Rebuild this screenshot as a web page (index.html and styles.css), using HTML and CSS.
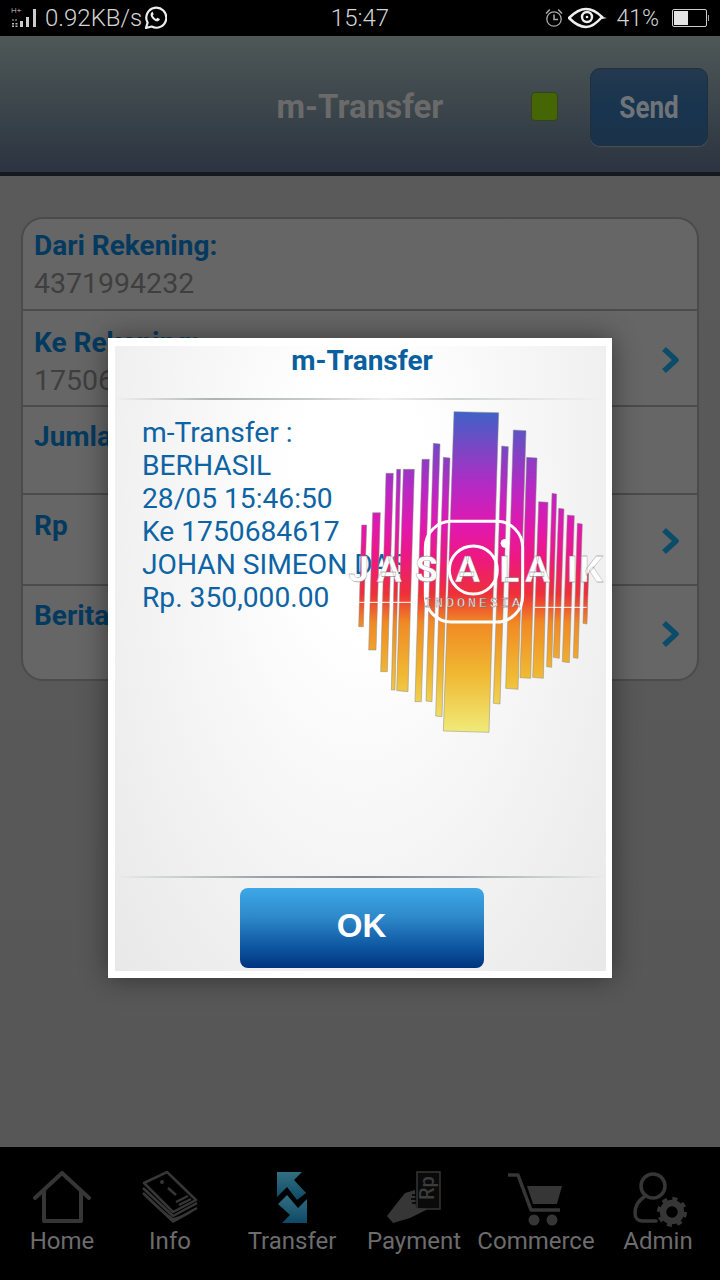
FILE: index.html
```html
<!DOCTYPE html>
<html lang="en">
<head>
  <meta charset="utf-8">
  <title>m-Transfer</title>
  <link rel="stylesheet" href="styles.css">
</head>
<body>
  <div class="phone">
    <div class="status">
      <div class="status-left">
        <svg class="signal" width="30" height="28" viewBox="0 0 30 28">
          <text x="2" y="9" class="hplus">H+</text>
          <path d="M3 16h6" stroke="#777" stroke-width="1.500" stroke-dasharray="2 1"/>
          <path d="M4 19v4M7.500 19v4" stroke="#bbb" stroke-width="2" stroke-dasharray="1.500 1"/>
          <rect x="11" y="17" width="3" height="6" fill="#ccc"/>
          <rect x="17" y="13" width="3" height="10" fill="#ccc"/>
          <rect x="24" y="5" width="3" height="18" fill="#ccc"/>
        </svg>
        <span class="speed">0.92KB/s</span>
        <svg width="24" height="26" viewBox="0 0 24 26">
          <path d="M3 23l1.600-5.400A10 10 0 1 1 8.600 21.500z" fill="none" stroke="#eee" stroke-width="2.200" stroke-linejoin="round"/>
          <path d="M8.500 7.500c-1.500 1.300-1.200 3.500.6 5.700 2 2.400 4.500 3.700 6.300 2.900 1-.5 1.500-1.300 1.400-2l-2.500-1.300-1.100 1.200c-1.400-.6-2.800-2-3.500-3.500l1-1.200-1.100-2.500c-.4-.1-.8 0-1.100.7z" fill="#eee"/>
        </svg>
      </div>
      <div class="clock">15:47</div>
      <div class="status-right">
        <svg width="18" height="20" viewBox="0 0 18 20">
          <circle cx="9" cy="11" r="7.200" fill="none" stroke="#aaa" stroke-width="1.300"/>
          <path d="M9 6.500V11.500H13M1 5.500L4.800 1.500M17 5.500L13.200 1.500" fill="none" stroke="#aaa" stroke-width="1.500"/>
        </svg>
        <svg class="eye" width="40" height="22" viewBox="0 0 40 22">
          <path d="M1 11C8 4 13 2 18 2s10 2 16 8c-6 7-11 10-16 10S8 18 1 11z" fill="#000" stroke="#eee" stroke-width="2.500"/>
          <circle cx="19" cy="10" r="5" fill="none" stroke="#eee" stroke-width="2.400"/>
          <circle cx="19" cy="10" r="1.300" fill="#eee"/>
          <path d="M33 9.500l6 1.500-5 1z" fill="#eee"/>
        </svg>
        <span class="battery-text">41%</span>
        <div class="battery"><div class="battery-fill"></div></div>
        <div class="battery-nub"></div>
      </div>
    </div>

    <div class="header">
      <div></div>
      <div class="header-title">m-Transfer</div>
      <div class="header-right">
        <div class="led"></div>
        <div class="send"><span>Send</span></div>
      </div>
    </div>

    <div class="main">
      <div class="card">
        <div class="row row-from">
          <div class="label">Dari Rekening:</div>
          <div class="value">4371994232</div>
        </div>
        <div class="row row-to">
          <div>
            <div class="label">Ke Rekening:</div>
            <div class="value">1750684617</div>
          </div>
          <svg class="chev" width="20" height="28" viewBox="0 0 20 28"><path d="M4 3l12 11L4 25" /></svg>
        </div>
        <div class="row row-amount">
          <div class="label">Jumlah</div>
        </div>
        <div class="row row-rp">
          <div class="label">Rp</div>
          <svg class="chev" width="20" height="28" viewBox="0 0 20 28"><path d="M4 3l12 11L4 25" /></svg>
        </div>
        <div class="row row-note">
          <div class="label">Berita</div>
          <svg class="chev" width="20" height="28" viewBox="0 0 20 28"><path d="M4 3l12 11L4 25" /></svg>
        </div>
      </div>
    </div>

    <div class="nav">
      <div class="nav-item">
        <svg width="64" height="56" viewBox="0 0 64 56">
          <path d="M5 27L32 2l27 25M14 20v30h37V20" fill="none" stroke="#363636" stroke-width="4" stroke-linejoin="round" stroke-linecap="round"/>
        </svg>
        <span>Home</span>
      </div>
      <div class="nav-item">
        <svg width="64" height="56" viewBox="0 0 64 56">
          <g fill="none" stroke="#363636" stroke-width="2.500" stroke-linejoin="round">
            <path d="M6 12L29 1l29 28-23 12z"/>
            <path d="M5 17l30 28 24-13"/>
            <path d="M5 22l30 28 24-13"/>
            <path d="M30 17l8 7M38 31l12-6M41 34l12-6"/>
          </g>
          <circle cx="24" cy="11" r="2" fill="#363636"/>
          <path d="M5 24l30 28 20-11-20 6z" fill="#363636"/>
        </svg>
        <span>Info</span>
      </div>
      <div class="nav-item">
        <svg width="64" height="56" viewBox="0 0 64 56">
          <defs>
            <linearGradient id="tr" x1="0" y1="0" x2="0" y2="1">
              <stop offset="0" stop-color="#336f82"/>
              <stop offset="1" stop-color="#0e4a66"/>
            </linearGradient>
          </defs>
          <path d="M17 1H42L34 9 46 22 37 29 27 16 17 26z" fill="url(#tr)"/>
          <path d="M47 52H22L30 44 18 33 27 24 38 37 47 28z" fill="url(#tr)"/>
        </svg>
        <span>Transfer</span>
      </div>
      <div class="nav-item">
        <svg width="64" height="56" viewBox="0 0 64 56">
          <rect x="35" y="1" width="23" height="37" fill="#0a0a0a" stroke="#363636" stroke-width="1.500"/>
          <text class="rp-note" transform="translate(52 29) rotate(-90)">Rp</text>
          <path d="M5 45L15 32 23 22 33 19 34 37 46 38 28 47 11 52z" fill="#363636"/>
          <path d="M30 24h4M29 28h5M30 32h4" stroke="#000" stroke-width="1.500"/>
        </svg>
        <span>Payment</span>
      </div>
      <div class="nav-item">
        <svg width="64" height="56" viewBox="0 0 64 56">
          <path d="M4 4h10l13 35h29" fill="none" stroke="#363636" stroke-width="3.500" stroke-linejoin="round"/>
          <path d="M23 15H58L53 33H29z" fill="#363636"/>
          <circle cx="30" cy="49" r="5.500" fill="#363636"/>
          <circle cx="48" cy="49" r="5.500" fill="#363636"/>
        </svg>
        <span>Commerce</span>
      </div>
      <div class="nav-item">
        <svg width="64" height="56" viewBox="0 0 64 56">
          <circle cx="27" cy="15" r="12" fill="none" stroke="#363636" stroke-width="3.500"/>
          <path d="M18 26c-6 4-9 9-9 16 0 5 3 8 7 8h14" fill="none" stroke="#363636" stroke-width="3.500" stroke-linecap="round"/>
          <circle cx="46" cy="41" r="9" fill="none" stroke="#363636" stroke-width="6.500"/>
          <circle cx="46" cy="41" r="13" fill="none" stroke="#363636" stroke-width="4" stroke-dasharray="5 5.200"/>
        </svg>
        <span>Admin</span>
      </div>
    </div>

    <!-- dialog sits over the dimmed form -->
    <div class="dialog">
      <div class="dialog-inner">
        <div class="dialog-title">m-Transfer</div>
        <div class="rule"></div>
        <div class="dialog-body">
          <p>m-Transfer :</p>
          <p>BERHASIL</p>
          <p>28/05 15:46:50</p>
          <p>Ke 1750684617</p>
          <p>JOHAN SIMEON DAS</p>
          <p>Rp. 350,000.00</p>
        </div>
        <svg class="logo" width="280" height="340" viewBox="0 0 840 1020">
          <defs>
            <linearGradient id="bars" gradientUnits="userSpaceOnUse" x1="0" y1="35" x2="0" y2="995">
              <stop offset="0" stop-color="#3f62c8"/>
              <stop offset="0.12" stop-color="#7c45c4"/>
              <stop offset="0.24" stop-color="#b828c4"/>
              <stop offset="0.36" stop-color="#e218ae"/>
              <stop offset="0.46" stop-color="#ee1880"/>
              <stop offset="0.57" stop-color="#ee3038"/>
              <stop offset="0.66" stop-color="#f08a24"/>
              <stop offset="0.82" stop-color="#f0b832"/>
              <stop offset="1" stop-color="#f0ea78"/>
            </linearGradient>
          </defs>
          <g fill="url(#bars)" stroke="#8a8a8a" stroke-width="1.500">
            <polygon points="65,375 80,375 70,680 56,680"/>
            <polygon points="98,338 121,338 108,750 86,750"/>
            <polygon points="138,220 160,220 142,815 122,815"/>
            <polygon points="170,208 182,208 165,870 154,870"/>
            <polygon points="190,208 223,208 204,875 170,872"/>
            <polygon points="246,178 268,178 244,905 225,905"/>
            <polygon points="280,130 300,132 276,905 258,903"/>
            <polygon points="310,172 330,174 306,950 287,948"/>
            <polygon points="342,35 476,38 447,997 310,993"/>
            <polygon points="485,138 505,140 480,912 460,910"/>
            <polygon points="520,90 558,92 534,868 497,865"/>
            <polygon points="560,172 591,174 572,835 540,833"/>
            <polygon points="596,305 624,307 610,835 578,832"/>
            <polygon points="636,280 650,282 635,802 620,800"/>
            <polygon points="656,325 672,327 658,775 640,772"/>
            <polygon points="682,345 703,347 688,788 667,785"/>
            <polygon points="712,370 727,372 714,775 700,773"/>
            <polygon points="733,520 746,520 741,672 729,670"/>
          </g>
          <g fill="none" stroke="#fff">
            <rect x="256" y="364" width="292" height="302" rx="78" stroke-width="9"/>
            <circle cx="400" cy="510" r="72" stroke-width="9"/>
            <path d="M58 607H215M585 622H740" stroke-width="3"/>
          </g>
          <circle cx="495" cy="430" r="13" fill="#fff"/>
          <text class="logo-name" x="25 110 225 345 430 478 555 680 718" y="546">JASA LAIK</text>
          <text class="logo-sub" x="252" y="622">INDONESIA</text>
        </svg>
        <div class="rule rule-bottom"></div>
        <div class="dialog-foot">
          <div class="ok">OK</div>
        </div>
      </div>
    </div>
  </div>
</body>
</html>
```

FILE: styles.css
```css
* {
  box-sizing: border-box;
}
body {
  margin: 0;
  font-family: Roboto, sans-serif;
}
p {
  margin: 0;
}
.phone {
  position: relative;
  width: 720px;
  height: 1280px;
  display: flex;
  flex-direction: column;
  background: #585858;
  overflow: hidden;
}

/* status bar */
.status {
  height: 36px;
  background: #000;
  color: #d4d4d4;
  display: grid;
  grid-template-columns: 1fr auto 1fr;
  align-items: center;
  font-size: 24px;
  font-weight: 300;
}
.status-left {
  display: flex;
  align-items: center;
  padding-left: 9px;
}
.speed {
  margin-left: 6px;
  margin-right: 1px;
}
.hplus {
  font-size: 8px;
  fill: #ddd;
}
.clock {
  font-size: 24px;
}
.status-right {
  display: flex;
  align-items: center;
  justify-content: flex-end;
  padding-right: 11px;
}
.eye {
  margin-left: 5px;
}
.battery-text {
  margin-left: 8px;
  font-size: 23px;
}
.battery {
  width: 35px;
  height: 18px;
  margin-left: 13px;
  border: 1px solid #ccc;
  border-radius: 2px;
  padding: 1px;
}
.battery-fill {
  width: 14px;
  height: 100%;
  background: #e4e4e4;
}
.battery-nub {
  width: 1px;
  height: 6px;
  margin-left: 1px;
  background: #aaa;
}

/* header */
.header {
  height: 140px;
  padding-top: 5px;
  display: grid;
  grid-template-columns: 1fr auto 1fr;
  align-items: center;
  background: linear-gradient(#4e5857, #2b3440);
  border-bottom: 4px solid #14191e;
}
.header-title {
  font-size: 33px;
  font-weight: 700;
  color: #6a6a6a;
}
.header-right {
  display: flex;
  align-items: center;
  justify-content: flex-end;
  padding-right: 12px;
}
.led {
  width: 27px;
  height: 29px;
  background: #466504;
  border: 1px solid #34441a;
  border-radius: 4px;
  margin-right: 32px;
}
.send {
  width: 118px;
  height: 78px;
  border-radius: 10px;
  background: linear-gradient(#24394e, #18344f 50%, #1b3349);
  box-shadow: 0 1px 1px #475460;
  border: 1px solid #1f2f3e;
  color: #6f7478;
  font-size: 29px;
  font-weight: 700;
  display: flex;
  align-items: center;
  justify-content: center;
}
.send span {
  display: block;
  transform: scale(0.9, 1.1);
}

/* form behind the dialog */
.main {
  flex: 1;
  padding: 41px 21px 0;
  background: linear-gradient(#5a5a5a, #575757);
}
.card {
  height: 464px;
  background: #666;
  border: 2px solid #4b4b4b;
  border-radius: 22px;
  overflow: hidden;
}
.row {
  padding: 11px 11px 0;
  border-bottom: 2px solid #4b4b4b;
  display: flex;
  flex-direction: column;
}
.row-from {
  height: 92px;
}
.row-to {
  height: 96px;
  flex-direction: row;
  justify-content: space-between;
  align-items: flex-start;
  padding-top: 16px;
}
.row-amount {
  height: 88px;
  padding-top: 14px;
}
.row-rp {
  height: 91px;
  flex-direction: row;
  justify-content: space-between;
  align-items: flex-start;
  padding-top: 15px;
}
.row-note {
  flex: 1;
  border-bottom: 0;
  flex-direction: row;
  justify-content: space-between;
  align-items: flex-start;
  padding-top: 14px;
}
.label {
  font-size: 28px;
  font-weight: 700;
  line-height: 32px;
  color: #053a60;
}
.value {
  font-size: 28.5px;
  line-height: 32px;
  margin-top: 6px;
  color: #3f3f3f;
}
.chev {
  margin: 16px 6px 0 0;
  flex: none;
}
.row-to .chev {
  margin-top: 19px;
}
.row-rp .chev {
  margin-top: 17px;
}
.row-note .chev {
  margin-top: 20px;
}
.chev path {
  fill: none;
  stroke: #0b4c6b;
  stroke-width: 5.500;
  stroke-linejoin: round;
}

/* bottom nav */
.nav {
  height: 133px;
  background: #000;
  display: grid;
  grid-template-columns: 124px 92px 152px 92px 152px 92px;
  padding-top: 24px;
}
.nav-item {
  display: flex;
  flex-direction: column;
  align-items: center;
  color: #6c6c6c;
  font-size: 24px;
  white-space: nowrap;
}
.rp-note {
  font-size: 20px;
  font-weight: 500;
  fill: #3c3c3c;
}

/* dialog */
.dialog {
  position: absolute;
  left: 108px;
  top: 338px;
  width: 504px;
  height: 640px;
  padding: 8px 6px 7px 7px;
  background: #fff;
  box-shadow: 0 0 26px rgba(0, 0, 0, 0.45);
}
.dialog-inner {
  position: relative;
  height: 100%;
  display: flex;
  flex-direction: column;
  background: radial-gradient(ellipse at 50% 25%, #fff 20%, #f5f5f5 55%, #e8e8e8 100%);
}
.dialog-title {
  height: 52px;
  padding: 0 0 0 3px;
  text-align: center;
  font-size: 28px;
  font-weight: 700;
  line-height: 29px;
  color: #0a5f9f;
}
.rule {
  height: 2px;
  flex: none;
  background: linear-gradient(90deg, transparent, #aeb2b2 20%, #c8cbcb 40%, #eee 55%, #d0d3d3 70%, transparent);
}
.dialog-body {
  flex: 1;
  padding: 16px 0 0 27px;
  font-size: 28.2px;
  line-height: 33px;
  color: #0d64a4;
  white-space: nowrap;
}
.logo {
  position: absolute;
  left: 225px;
  top: 54px;
}
.logo-name {
  font-size: 112px;
  font-weight: 700;
  fill: #fff;
  stroke: #777;
  stroke-width: 1;
}
.logo-sub {
  font-family: "Liberation Mono", monospace;
  font-size: 40px;
  letter-spacing: 9px;
  fill: #fff;
  stroke: #666;
  stroke-width: 1;
}
.rule-bottom {
  background: linear-gradient(90deg, transparent, #9aa4a4 30%, #7d8a8a 50%, #9aa4a4 70%, transparent);
}
.dialog-foot {
  height: 93px;
  padding: 10px 0 0 2px;
  display: flex;
  justify-content: center;
  align-items: flex-start;
}
.ok {
  width: 244px;
  height: 80px;
  padding-bottom: 5px;
  border-radius: 8px;
  background: linear-gradient(#3ea8e6, #2f8acb 35%, #0d559f 75%, #00337f);
  color: #fff;
  font-size: 33px;
  font-weight: 700;
  font-family: "Liberation Sans", sans-serif;
  display: flex;
  align-items: center;
  justify-content: center;
}
```
